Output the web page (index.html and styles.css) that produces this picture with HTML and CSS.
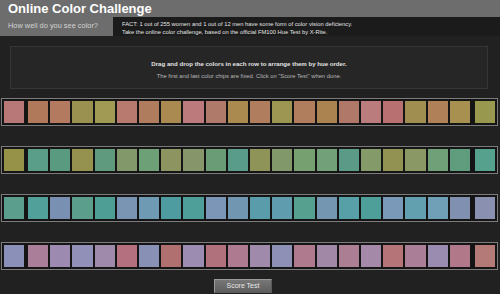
FILE: index.html
```html
<!DOCTYPE html>
<html lang="en">
<head>
    <meta charset="UTF-8">
    <meta name="viewport" content="width=device-width, initial-scale=1.0">
    <title>Online Color Challenge</title>
    <link rel="stylesheet" href="styles.css">
</head>
<body>
    <div class="header">
        <h1 class="title">Online Color Challenge</h1>
        <div class="subbar">
            <div class="tagline">How well do you see color?</div>
            <div class="fact">
                FACT: 1 out of 255 women and 1 out of 12 men have some form of color vision deficiency.<br>
                Take the online color challenge, based on the official FM100 Hue Test by X-Rite.
            </div>
        </div>
    </div>

    <div class="intro">
        <p class="intro-lead">Drag and drop the colors in each row to arrange them by hue order.</p>
        <p class="intro-note">The first and last color chips are fixed. Click on "Score Test" when done.</p>
    </div>

    <div class="rows" id="rows"></div>

    <div class="actions">
        <button type="button" class="score-btn">Score Test</button>
    </div>

    <script>
        // current order of the chips, first and last are fixed
        const rows = [
            ['#b87878', '#b07a5a', '#b37a60', '#9a9050', '#a09a55', '#b87a6e', '#b07c5e', '#aa8a50', '#bc7a7c', '#b07a6a', '#aa8a4e',
             '#b07e5e', '#9c9652', '#b07e5c', '#aa8350', '#b07868', '#ba7c7c', '#b87070', '#a08e50', '#b08058', '#a89050', '#98984e'],
            ['#969248', '#5a9e8a', '#5a9a80', '#94924e', '#609a7e', '#82986a', '#6ea078', '#8e9460', '#86966a', '#6a9c76', '#5a9c8a',
             '#8e9458', '#80986a', '#76a070', '#72a078', '#5c9a88', '#849a68', '#929252', '#8a9866', '#70a078', '#609c7e', '#56a08e'],
            ['#5c9e8e', '#52a09a', '#7a90b2', '#5c9e8c', '#4e9e96', '#7a94b4', '#6e9ab4', '#4e9ca0', '#4e9e9a', '#7c96b8', '#7096b2',
             '#5a9caa', '#5e9cae', '#56a090', '#7496b0', '#58a0a8', '#4e9e9a', '#7a98b8', '#62a0b0', '#70a0b8', '#8090b0', '#8a90b0'],
            ['#8a90b8', '#aa7e98', '#9c8ab0', '#9090b8', '#a08aac', '#b4707e', '#8890b6', '#b07070', '#9c8cb2', '#b0707c', '#ae7a90',
             '#a08aac', '#8e90b6', '#b07a8e', '#a088a6', '#ac7e94', '#a48aa8', '#b47478', '#aa7e96', '#9a8cb0', '#b07888', '#b47a78']
        ];

        const container = document.getElementById('rows');
        rows.forEach(colors => {
            const row = document.createElement('div');
            row.className = 'hue-row';
            const track = document.createElement('div');
            track.className = 'chip-track';
            colors.forEach((color, i) => {
                const chip = document.createElement('div');
                chip.className = 'chip';
                chip.style.background = color;
                if (i === 0 || i === colors.length - 1) {
                    chip.classList.add('fixed');
                    row.appendChild(chip);
                    if (i === 0) row.appendChild(track);
                } else {
                    track.appendChild(chip);
                }
            });
            container.appendChild(row);
        });
    </script>
</body>
</html>
```

FILE: styles.css
```css
body {
    margin: 0;
    background-color: #212121;
    font-family: "Liberation Sans", Arial, sans-serif;
    color: #ddd;
}
.header {
    background-color: #6d6d6d;
}
.title {
    margin: 0;
    padding-left: 8px;
    height: 17px;
    line-height: 18px;
    font-size: 13px;
    font-weight: bold;
    color: #fff;
}
.subbar {
    display: flex;
    height: 19px;
}
.tagline {
    width: 105px;
    padding-left: 8px;
    font-size: 7.4px;
    line-height: 18px;
    color: #d4d4d4;
}
.fact {
    flex: 1;
    background-color: #1b1b1b;
    padding: 3px 0 0 9px;
    font-size: 5.8px;
    line-height: 8px;
    color: #e2e2e2;
}
.intro {
    margin: 10px 12px 0 10px;
    height: 41px;
    border: 1px solid #363636;
    background-color: #262626;
    text-align: center;
}
.intro p {
    margin: 0;
}
.intro-lead {
    padding-top: 11px;
    font-size: 6.1px;
    font-weight: bold;
    line-height: 12px;
    color: #e4e4e4;
}
.intro-note {
    font-size: 5.8px;
    line-height: 12px;
    color: #b8b8b8;
}
.rows {
    padding: 9px 2px 0 1px;
}
.hue-row {
    display: flex;
    gap: 2px;
    padding: 1px;
    margin-bottom: 20px;
    border: 1px solid #7c7c7c;
    background-color: #141414;
}
.chip-track {
    flex: 1;
    display: flex;
    margin-right: 1px;
}
.chip {
    flex: 1;
    height: 22px;
    border: 1px solid #151515;
}
.chip.fixed {
    flex: none;
    width: 20px;
}
.actions {
    display: flex;
    margin-top: -11px;
    padding-left: 214px;
}
.score-btn {
    display: block;
    width: 58px;
    height: 14px;
    padding: 0;
    border: 1px solid #5a5a5a;
    border-top-color: #9a9a9a;
    border-left-color: #9a9a9a;
    background: linear-gradient(#777, #5e5e5e);
    font-family: "Liberation Sans", Arial, sans-serif;
    font-size: 7px;
    line-height: 12px;
    color: #e8e8e8;
    cursor: pointer;
}
.score-btn:hover {
    background: #808080;
}
```
